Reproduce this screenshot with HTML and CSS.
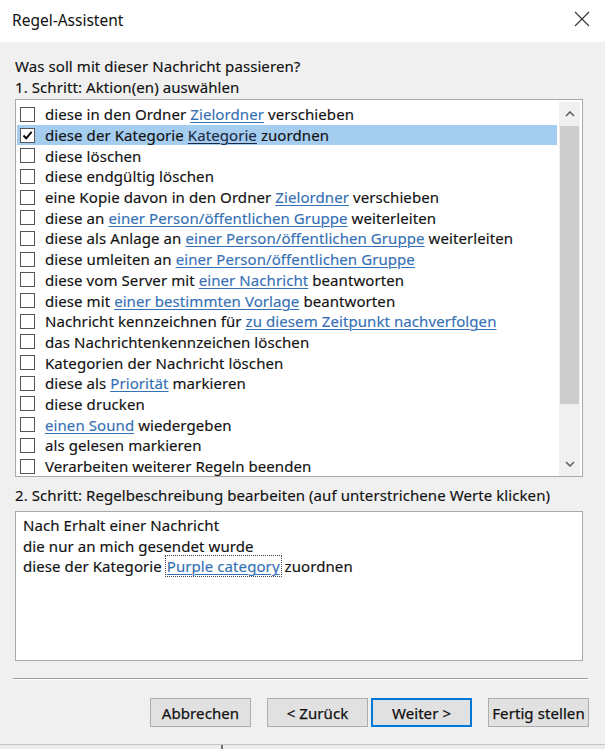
FILE: index.html
```html
<!DOCTYPE html>
<html lang="de">
<head>
<meta charset="utf-8">
<title>Regel-Assistent</title>
<link rel="stylesheet" href="styles.css">
</head>
<body>
<div class="window">
  <div class="titlebar">
    <span class="title">Regel-Assistent</span>
    <svg class="close" width="16" height="16" viewBox="0 0 16 16"><path d="M1 1 L15 15 M15 1 L1 15" stroke="#333" stroke-width="1.1" fill="none"/></svg>
  </div>
  <div class="content">
    <div class="label">Was soll mit dieser Nachricht passieren?</div>
    <div class="label">1. Schritt: Aktion(en) auswählen</div>
    <div class="listbox">
      <div class="rows">
        <div class="row"><span class="cb"></span><span>diese in den Ordner <a class="lnk">Zielordner</a> verschieben</span></div>
        <div class="row sel"><span class="cb"><svg width="13" height="13" viewBox="0 0 13 13"><path d="M2.5 6.5 L5.2 9.4 L10.6 2.8" stroke="#000" stroke-width="1.9" fill="none"/></svg></span><span>diese der Kategorie <a class="lnk dark">Kategorie</a> zuordnen</span></div>
        <div class="row"><span class="cb"></span><span>diese löschen</span></div>
        <div class="row"><span class="cb"></span><span>diese endgültig löschen</span></div>
        <div class="row"><span class="cb"></span><span>eine Kopie davon in den Ordner <a class="lnk">Zielordner</a> verschieben</span></div>
        <div class="row"><span class="cb"></span><span>diese an <a class="lnk">einer Person/öffentlichen Gruppe</a> weiterleiten</span></div>
        <div class="row"><span class="cb"></span><span>diese als Anlage an <a class="lnk">einer Person/öffentlichen Gruppe</a> weiterleiten</span></div>
        <div class="row"><span class="cb"></span><span>diese umleiten an <a class="lnk">einer Person/öffentlichen Gruppe</a></span></div>
        <div class="row"><span class="cb"></span><span>diese vom Server mit <a class="lnk">einer Nachricht</a> beantworten</span></div>
        <div class="row"><span class="cb"></span><span>diese mit <a class="lnk">einer bestimmten Vorlage</a> beantworten</span></div>
        <div class="row"><span class="cb"></span><span>Nachricht kennzeichnen für <a class="lnk">zu diesem Zeitpunkt nachverfolgen</a></span></div>
        <div class="row"><span class="cb"></span><span>das Nachrichtenkennzeichen löschen</span></div>
        <div class="row"><span class="cb"></span><span>Kategorien der Nachricht löschen</span></div>
        <div class="row"><span class="cb"></span><span>diese als <a class="lnk">Priorität</a> markieren</span></div>
        <div class="row"><span class="cb"></span><span>diese drucken</span></div>
        <div class="row"><span class="cb"></span><span><a class="lnk">einen Sound</a> wiedergeben</span></div>
        <div class="row"><span class="cb"></span><span>als gelesen markieren</span></div>
        <div class="row"><span class="cb"></span><span>Verarbeiten weiterer Regeln beenden</span></div>
      </div>
      <div class="scrollbar">
        <div class="arrow"><svg width="10" height="6" viewBox="0 0 10 6"><path d="M1 5 L5 1 L9 5" stroke="#606060" stroke-width="1.6" fill="none"/></svg></div>
        <div class="thumb"></div>
        <div class="track"></div>
        <div class="arrow"><svg width="10" height="6" viewBox="0 0 10 6"><path d="M1 1 L5 5 L9 1" stroke="#606060" stroke-width="1.6" fill="none"/></svg></div>
      </div>
    </div>
    <div class="label step2">2. Schritt: Regelbeschreibung bearbeiten (auf unterstrichene Werte klicken)</div>
    <div class="descbox">
      <div class="dline">Nach Erhalt einer Nachricht</div>
      <div class="dline">die nur an mich gesendet wurde</div>
      <div class="dline">diese der Kategorie <a class="lnk focus">Purple category</a> zuordnen</div>
    </div>
    <div class="separator"></div>
    <div class="buttons">
      <button class="btn">Abbrechen</button>
      <button class="btn gap-l">&lt; Zurück</button>
      <button class="btn default gap-s">Weiter &gt;</button>
      <button class="btn gap-l">Fertig stellen</button>
    </div>
  </div>
</div>
<div class="desktop"><span class="mark"></span></div>
</body>
</html>
```
FILE: styles.css
```css
html, body {
  margin: 0;
  padding: 0;
  background: #ffffff;
}
body {
  width: 605px;
  height: 750px;
  overflow: hidden;
  font-family: "Noto Sans", "Open Sans", sans-serif;
  font-size: 15px;
  letter-spacing: 0.08px;
  color: #111;
  -webkit-text-stroke: 0.15px currentColor;
}
.window {
  height: 745px;
  background: #f0f0f0;
  border-bottom: 1px solid #c6c6c6;
  box-sizing: border-box;
}
.titlebar {
  height: 42px;
  background: #fff;
  display: flex;
  align-items: center;
  justify-content: space-between;
  padding: 0 15px 0 12px;
}
.title {
  font-size: 15.5px;
  letter-spacing: 0;
  color: #111;
  padding-bottom: 2px;
  -webkit-text-stroke: 0;
}
.close {
  margin-bottom: 4px;
}
.content {
  padding: 14px 0 0 15px;
}
.label {
  line-height: 21px;
  height: 21px;
  white-space: nowrap;
}
.listbox {
  margin-top: 1px;
  width: 568px;
  height: 378px;
  box-sizing: border-box;
  border: 1px solid #a9a9a9;
  background: #fff;
  display: flex;
  overflow: hidden;
}
.rows {
  flex: 1;
  padding: 4px 0 0 1px;
  min-width: 0;
}
.row {
  height: 20.7px;
  display: flex;
  align-items: center;
  white-space: nowrap;
  gap: 10px;
}
.row.sel {
  background: #a5cdf0;
}
.cb {
  width: 13px;
  height: 13px;
  margin-left: 3px;
  border: 1px solid #555;
  background: #fff;
  flex: none;
  display: flex;
  align-items: center;
  justify-content: center;
}
.cb svg {
  display: block;
}
.lnk {
  color: #3570b5;
  text-decoration: underline;
  text-underline-offset: 2px;
  text-decoration-thickness: 1px;
}
.lnk.dark {
  color: #1b2a45;
}
.scrollbar {
  width: 21px;
  margin: 2px 2px 0 2px;
  background: #f0f0f0;
  display: flex;
  flex-direction: column;
}
.arrow {
  height: 24px;
  display: flex;
  align-items: center;
  justify-content: center;
  flex: none;
}
.arrow svg {
  display: block;
}
.thumb {
  height: 278px;
  margin: 0 1px;
  background: #cdcdcd;
  flex: none;
}
.track {
  flex: 1;
}
.step2 {
  margin-top: 8px;
}
.descbox {
  margin-top: 5px;
  width: 568px;
  height: 150px;
  box-sizing: border-box;
  border: 1px solid #a9a9a9;
  background: #fff;
  padding: 3px 7px;
}
.dline {
  line-height: 20.5px;
  height: 20.5px;
  white-space: nowrap;
}
.lnk.focus {
  outline: 1px dotted #444;
  outline-offset: 0;
  padding: 0 1px;
}
.separator {
  margin: 17px 0 0 -2px;
  width: 575px;
  height: 1px;
  background: #a0a0a0;
  border-bottom: 1px solid #fff;
}
.buttons {
  margin-top: 18px;
  display: flex;
  justify-content: flex-end;
  padding-right: 16px;
}
.btn {
  width: 101px;
  height: 29px;
  box-sizing: border-box;
  background: #e1e1e1;
  border: 1px solid #adadad;
  font-family: inherit;
  font-size: 15px;
  letter-spacing: 0.08px;
  color: #111;
  -webkit-text-stroke: 0.25px currentColor;
  padding: 0;
  margin: 0;
}
.btn.gap-l {
  margin-left: 16px;
}
.btn.gap-s {
  margin-left: 3px;
}
.btn.default {
  border: 2px solid #0078d7;
}
.desktop {
  height: 4px;
  background: #ececec;
  position: relative;
}
.mark {
  position: absolute;
  left: 221px;
  top: 0;
  width: 2px;
  height: 4px;
  background: #707070;
}
```
